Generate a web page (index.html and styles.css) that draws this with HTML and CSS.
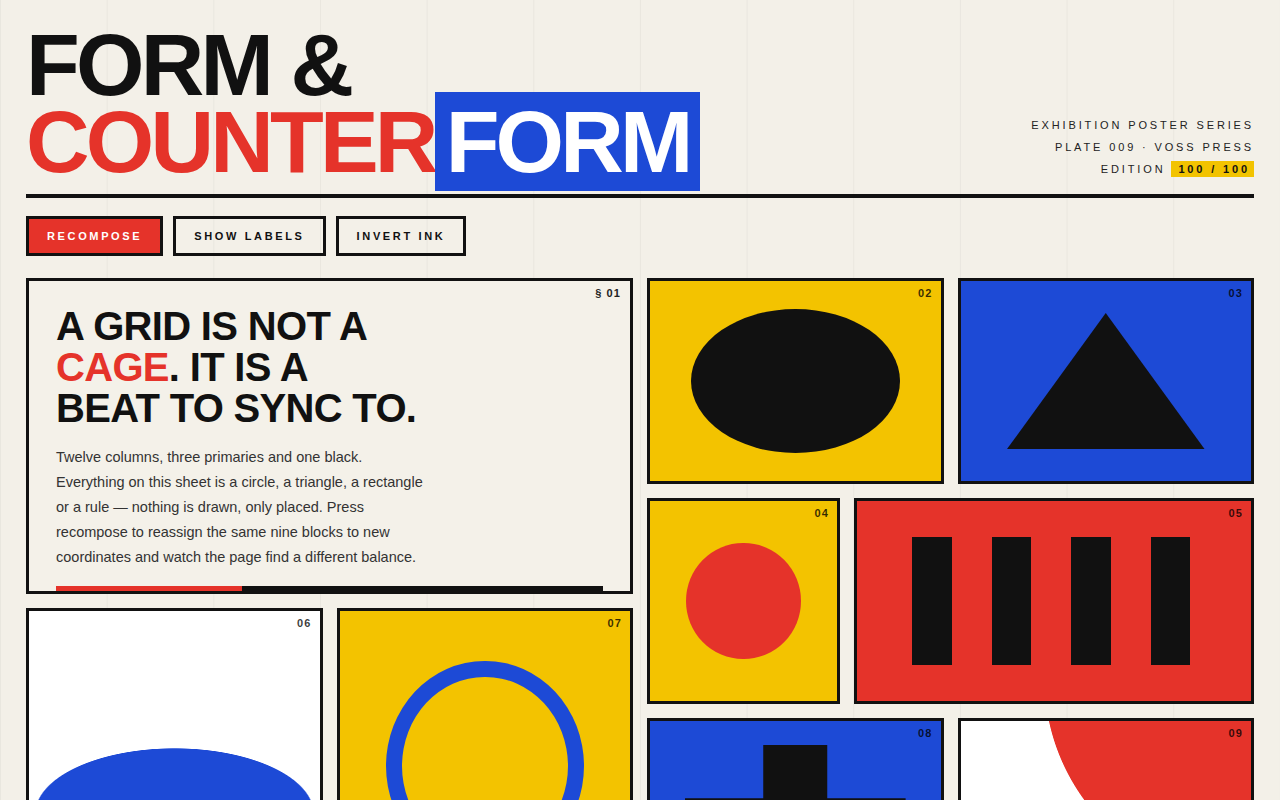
FILE: index.html
```html
<!DOCTYPE html>
<html lang="en">
<head>
<meta charset="utf-8">
<title>Form &amp; Counterform</title>
<link rel="stylesheet" href="styles.css">
</head>
<body>
<header class="masthead">
  <h1 class="title">
    <span class="title-line">FORM &amp;</span>
    <span class="title-line"><span class="ink-red">COUNTER</span><span class="boxed">FORM</span></span>
  </h1>
  <div class="meta">
    <div>EXHIBITION POSTER SERIES</div>
    <div>PLATE 009 · VOSS PRESS</div>
    <div>EDITION <span class="badge">100 / 100</span></div>
  </div>
</header>

<nav class="controls">
  <button class="btn btn-primary">RECOMPOSE</button>
  <button class="btn">SHOW LABELS</button>
  <button class="btn">INVERT INK</button>
</nav>

<main class="board">
  <article class="panel panel-intro">
    <span class="tag">§ 01</span>
    <h2 class="intro-title">A GRID IS NOT A<br><span class="ink-red">CAGE</span>. IT IS A<br>BEAT TO SYNC TO.</h2>
    <p class="intro-text">Twelve columns, three primaries and one black. Everything on this sheet is a circle, a triangle, a rectangle or a rule — nothing is drawn, only placed. Press recompose to reassign the same nine blocks to new coordinates and watch the page find a different balance.</p>
    <div class="rule"><div class="rule-fill" style="width:34%"></div></div>
  </article>

  <div class="panel p02 bg-yellow">
    <span class="tag">02</span>
    <div class="oval"></div>
  </div>

  <div class="panel p03 bg-blue">
    <span class="tag">03</span>
    <div class="triangle"></div>
  </div>

  <div class="panel p04 bg-yellow">
    <span class="tag">04</span>
    <div class="dot"></div>
  </div>

  <div class="panel p05 bg-red">
    <span class="tag">05</span>
    <div class="bars">
      <span class="bar"></span><span class="bar"></span><span class="bar"></span><span class="bar"></span>
    </div>
  </div>

  <div class="panel p06">
    <span class="tag">06</span>
  </div>

  <div class="panel p07 bg-yellow">
    <span class="tag">07</span>
    <div class="ring"></div>
  </div>

  <div class="panel p08 bg-blue">
    <span class="tag">08</span>
    <div class="cross"></div>
  </div>

  <div class="panel p09">
    <span class="tag">09</span>
  </div>
</main>
</body>
</html>
```

FILE: styles.css
```css
* { box-sizing: border-box; }

html, body { margin: 0; }

body {
  padding: 27px 26px 40px;
  font-family: "Liberation Sans", Arial, sans-serif;
  color: #111;
  background-color: #f3f0e8;
  background-image: linear-gradient(to right, rgba(0, 0, 0, 0.04) 1px, transparent 1px);
  background-size: calc(100% / 12) 100%;
}

.ink-red { color: #e5332a; }

/* ---------- masthead ---------- */
.masthead {
  display: flex;
  justify-content: space-between;
  align-items: flex-end;
  padding-bottom: 14px;
  border-bottom: 4px solid #111;
}

.title {
  margin: 0;
  font-size: 88px;
  line-height: 0.87;
  font-weight: 700;
  letter-spacing: -0.043em;
  color: #111;
}

.title-line { display: block; white-space: nowrap; }

.boxed {
  background: #1d4ad6;
  color: #fff;
  padding: 0 10px 0 11px;
}

.meta {
  text-align: right;
  font-size: 11px;
  line-height: 22px;
  letter-spacing: 0.26em;
  color: #222;
}

.badge {
  background: #f2c300;
  color: #111;
  font-weight: 700;
  padding: 2px 4px 2px 7px;
}

/* ---------- controls ---------- */
.controls {
  display: flex;
  gap: 10px;
  margin-top: 18px;
}

.btn {
  height: 40px;
  padding: 0 18px;
  border: 3px solid #111;
  background: transparent;
  color: #111;
  font-family: "Liberation Sans", Arial, sans-serif;
  font-size: 11px;
  font-weight: 700;
  letter-spacing: 0.24em;
  cursor: pointer;
}

.btn-primary {
  background: #e5332a;
  color: #fff;
}

/* ---------- board ---------- */
.board {
  margin-top: 22px;
  display: grid;
  grid-template-columns: repeat(12, 1fr);
  grid-auto-rows: 96px;
  gap: 14px;
}

.panel {
  position: relative;
  overflow: hidden;
  border: 3px solid #111;
  background: #fff;
  display: flex;
  align-items: center;
  justify-content: center;
}

.bg-yellow { background: #f3c300; }
.bg-blue { background: #1d4ad6; }
.bg-red { background: #e5332a; }

.tag {
  position: absolute;
  top: 5px;
  right: 8px;
  font-size: 11px;
  line-height: 14px;
  font-weight: 700;
  letter-spacing: 0.1em;
  color: rgba(0, 0, 0, 0.78);
}

.panel-intro {
  grid-column: 1 / span 6;
  grid-row: 1 / span 3;
  background: #f4f1e9;
  flex-direction: column;
  align-items: stretch;
  justify-content: flex-start;
  padding: 25px 27px 0;
}

.panel-intro .tag { color: #222; right: 9px; }

.intro-title {
  margin: 0;
  font-size: 40px;
  line-height: 41px;
  font-weight: 700;
  letter-spacing: -0.017em;
  color: #111;
}

.intro-text {
  margin: 16px 0 0;
  max-width: 372px;
  font-size: 14.5px;
  line-height: 25px;
  color: #333;
}

.rule {
  margin-top: auto;
  height: 5px;
  background: #111;
}

.rule-fill {
  height: 100%;
  background: #e5332a;
}

.p02 { grid-column: 7 / span 3; grid-row: 1 / span 2; }
.p03 { grid-column: 10 / span 3; grid-row: 1 / span 2; }
.p04 { grid-column: 7 / span 2; grid-row: 3 / span 2; }
.p05 { grid-column: 9 / span 4; grid-row: 3 / span 2; }
.p06 {
  grid-column: 1 / span 3;
  grid-row: 4 / span 3;
  background: radial-gradient(ellipse 140px 66px at 50% 203px, #1d4ad6 99%, #fff 100%);
}
.p07 { grid-column: 4 / span 3; grid-row: 4 / span 3; }
.p08 { grid-column: 7 / span 3; grid-row: 5 / span 2; }
.p09 {
  grid-column: 10 / span 3;
  grid-row: 5 / span 2;
  background: radial-gradient(circle 207px at 100% -43px, #e5332a 99.6%, #fff 100%);
}

/* ---------- shapes ---------- */
.oval {
  width: 72%;
  height: 72%;
  border-radius: 50%;
  background: #111;
}

.triangle {
  width: 68%;
  height: 68%;
  background: #111;
  clip-path: polygon(50% 0, 100% 100%, 0 100%);
}

.dot {
  width: 61%;
  height: 58%;
  border-radius: 50%;
  background: #e5332a;
}

.bars {
  width: 100%;
  height: 64%;
  display: flex;
  justify-content: center;
  gap: 40px;
  padding-right: 6px;
}

.bar {
  width: 39.5px;
  height: 100%;
  background: #111;
}

.ring {
  width: 68%;
  height: 68%;
  border: 16px solid #1d4ad6;
  border-radius: 50%;
}

.cross {
  width: 76%;
  height: 76%;
  background: #111;
  clip-path: polygon(35.5% 0, 64.5% 0, 64.5% 35%, 100% 35%, 100% 65%, 64.5% 65%, 64.5% 100%, 35.5% 100%, 35.5% 65%, 0 65%, 0 35%, 35.5% 35%);
}
```
